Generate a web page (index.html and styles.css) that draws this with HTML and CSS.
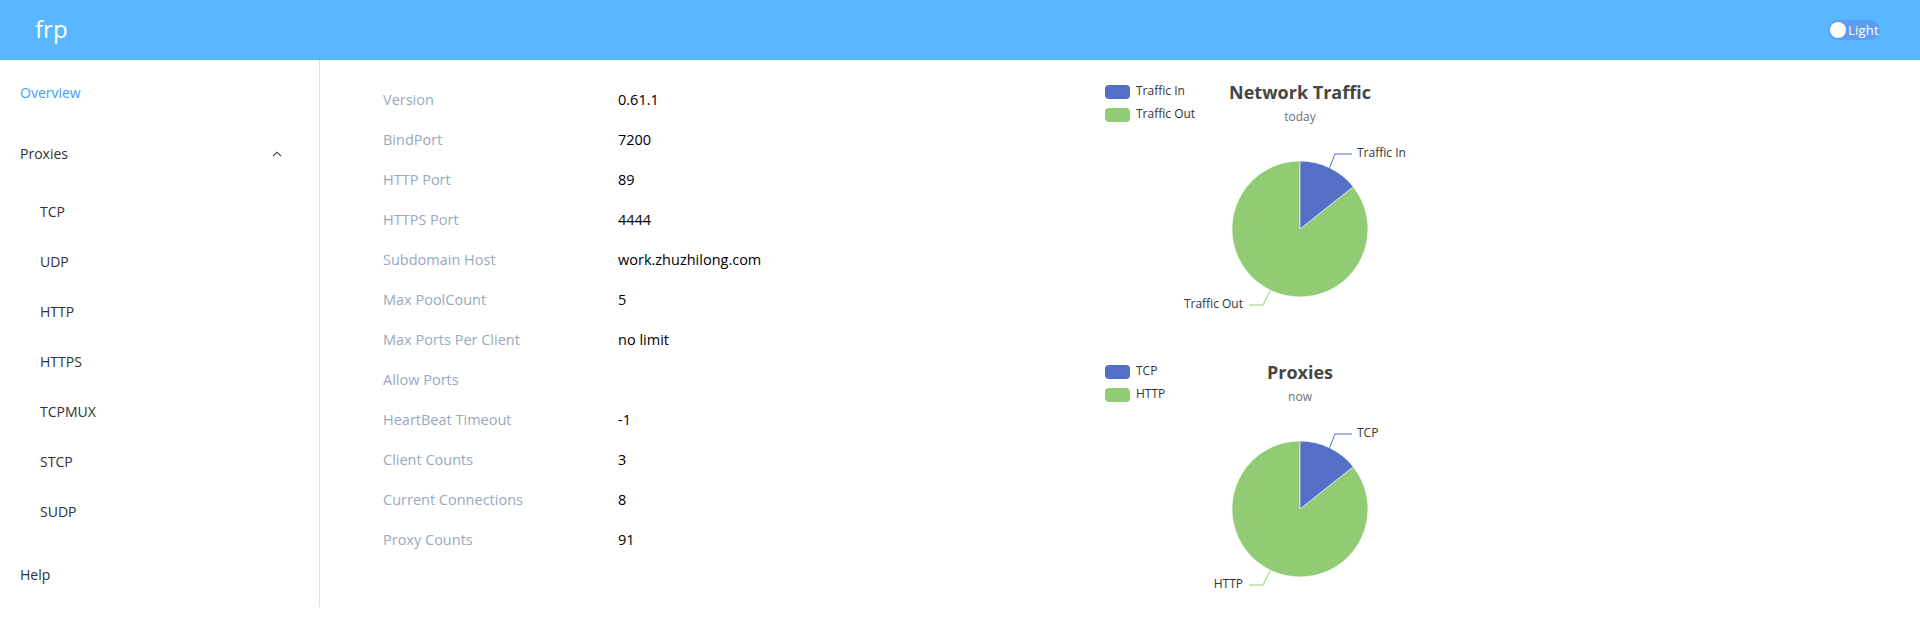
FILE: index.html
```html
<!DOCTYPE html>
<html lang="en">
<head>
<meta charset="utf-8">
<title>frp dashboard</title>
<link rel="stylesheet" href="styles.css">
</head>
<body>
<header class="header">
  <div class="logo">frp</div>
  <div class="theme-switch">
    <span class="knob"></span>
    <span class="switch-text">Light</span>
  </div>
</header>
<div class="layout">
  <aside class="aside">
    <ul class="menu">
      <li class="menu-item overview active">Overview</li>
      <li class="submenu-title">
        <span>Proxies</span>
        <svg class="chevron" width="10" height="6" viewBox="0 0 10 6"><path d="M1 5.2 L5 1.2 L9 5.2" fill="none" stroke="#303133" stroke-width="1.1"/></svg>
      </li>
      <li class="submenu">
        <ul>
          <li class="sub-item">TCP</li>
          <li class="sub-item">UDP</li>
          <li class="sub-item">HTTP</li>
          <li class="sub-item">HTTPS</li>
          <li class="sub-item">TCPMUX</li>
          <li class="sub-item">STCP</li>
          <li class="sub-item">SUDP</li>
        </ul>
      </li>
      <li class="menu-item help">Help</li>
    </ul>
  </aside>
  <main class="main">
    <div class="info">
      <div class="row"><span class="label">Version</span><span class="value">0.61.1</span></div>
      <div class="row"><span class="label">BindPort</span><span class="value">7200</span></div>
      <div class="row"><span class="label">HTTP Port</span><span class="value">89</span></div>
      <div class="row"><span class="label">HTTPS Port</span><span class="value">4444</span></div>
      <div class="row"><span class="label">Subdomain Host</span><span class="value">work.zhuzhilong.com</span></div>
      <div class="row"><span class="label">Max PoolCount</span><span class="value">5</span></div>
      <div class="row"><span class="label">Max Ports Per Client</span><span class="value">no limit</span></div>
      <div class="row"><span class="label">Allow Ports</span><span class="value"></span></div>
      <div class="row"><span class="label">HeartBeat Timeout</span><span class="value">-1</span></div>
      <div class="row"><span class="label">Client Counts</span><span class="value">3</span></div>
      <div class="row"><span class="label">Current Connections</span><span class="value">8</span></div>
      <div class="row"><span class="label">Proxy Counts</span><span class="value">91</span></div>
    </div>
    <div class="charts">
      <svg class="chart" width="400" height="280" viewBox="0 0 400 280">
        <rect x="5" y="15" width="25" height="14" rx="4" fill="#5470c6"/>
        <text class="legend-text" x="36" y="22">Traffic In</text>
        <rect x="5" y="38" width="25" height="14" rx="4" fill="#91cc75"/>
        <text class="legend-text" x="36" y="45">Traffic Out</text>
        <text class="chart-title" x="200" y="24">Network Traffic</text>
        <text class="chart-sub" x="200" y="48">today</text>
        <path d="M200 159 L253.2 116.7 A68 68 0 1 1 200 91 Z" fill="#91cc75" stroke="#fff" stroke-width="0.6"/>
        <path d="M200 159 L200 91 A68 68 0 0 1 253.2 116.7 Z" fill="#5470c6" stroke="#fff" stroke-width="0.6"/>
        <polyline points="229.6,97.8 235,84 252,84" fill="none" stroke="#5470c6" stroke-width="1"/>
        <text class="pie-label" x="257" y="84">Traffic In</text>
        <polyline points="170.4,220.2 163,235 149,235" fill="none" stroke="#91cc75" stroke-width="1"/>
        <text class="pie-label end" x="143" y="235">Traffic Out</text>
      </svg>
      <svg class="chart" width="400" height="280" viewBox="0 0 400 280">
        <rect x="5" y="15" width="25" height="14" rx="4" fill="#5470c6"/>
        <text class="legend-text" x="36" y="22">TCP</text>
        <rect x="5" y="38" width="25" height="14" rx="4" fill="#91cc75"/>
        <text class="legend-text" x="36" y="45">HTTP</text>
        <text class="chart-title" x="200" y="24">Proxies</text>
        <text class="chart-sub" x="200" y="48">now</text>
        <path d="M200 159 L253.2 116.7 A68 68 0 1 1 200 91 Z" fill="#91cc75" stroke="#fff" stroke-width="0.6"/>
        <path d="M200 159 L200 91 A68 68 0 0 1 253.2 116.7 Z" fill="#5470c6" stroke="#fff" stroke-width="0.6"/>
        <polyline points="229.6,97.8 235,84 252,84" fill="none" stroke="#5470c6" stroke-width="1"/>
        <text class="pie-label" x="257" y="84">TCP</text>
        <polyline points="170.4,220.2 163,235 149,235" fill="none" stroke="#91cc75" stroke-width="1"/>
        <text class="pie-label end" x="143" y="235">HTTP</text>
      </svg>
    </div>
  </main>
</div>
</body>
</html>
```
FILE: styles.css
```css
* { box-sizing: border-box; }
html, body { margin: 0; padding: 0; }
body {
  font-family: "Open Sans", "Noto Sans", "Liberation Sans", sans-serif;
  font-size: 14px;
  color: #303133;
  background: #fff;
  overflow: hidden;
}
ul { list-style: none; margin: 0; padding: 0; }

.header {
  height: 60px;
  background: #58b7ff;
  display: flex;
  align-items: center;
  justify-content: space-between;
  padding: 0 40px 0 35px;
}
.logo {
  color: #fff;
  font-size: 24px;
  line-height: 60px;
  margin-top: -2px;
}
.theme-switch {
  width: 52px;
  height: 20px;
  border-radius: 10px;
  background: #5d9cf2;
  display: flex;
  align-items: center;
  padding-left: 2px;
  gap: 2px;
}
.knob {
  width: 16px;
  height: 16px;
  border-radius: 50%;
  background: #fff;
  flex: none;
}
.switch-text {
  color: #fff;
  font-size: 13px;
  line-height: 20px;
  letter-spacing: 0.2px;
}

.layout { display: flex; }
.aside {
  width: 320px;
  height: 547px;
  border-right: 1px solid #dcdfe6;
  flex: none;
}
.menu-item, .submenu-title {
  height: 56px;
  line-height: 56px;
  padding-left: 20px;
}
.overview { margin-top: 5px; }
.active { color: #409eff; }
.submenu-title {
  margin-top: 5px;
  display: flex;
  align-items: center;
  justify-content: space-between;
  padding-right: 37px;
}
.chevron { display: block; margin-top: -1px; }
.submenu { padding-top: 5px; }
.sub-item {
  height: 50px;
  line-height: 50px;
  padding-left: 40px;
}
.help { margin-top: 10px; }

.main {
  flex: 1;
  display: flex;
}
.info {
  flex: 1;
  padding: 20px 0 0 63px;
  font-size: 14.5px;
}
.row {
  display: flex;
  height: 40px;
  line-height: 40px;
}
.label {
  width: 235px;
  color: #99a9bf;
}
.value { color: #000; }

.charts {
  width: 400px;
  margin-right: 420px;
  padding-top: 10px;
  display: flex;
  flex-direction: column;
}
.chart { display: block; }
.legend-text {
  font-size: 12px;
  fill: #333;
  dominant-baseline: middle;
}
.chart-title {
  font-size: 18px;
  font-weight: 700;
  fill: #464646;
  text-anchor: middle;
  dominant-baseline: middle;
}
.chart-sub {
  font-size: 12px;
  fill: #6e7079;
  text-anchor: middle;
  dominant-baseline: middle;
}
.pie-label {
  font-size: 12px;
  fill: #333;
  dominant-baseline: middle;
}
.pie-label.end { text-anchor: end; }
```
